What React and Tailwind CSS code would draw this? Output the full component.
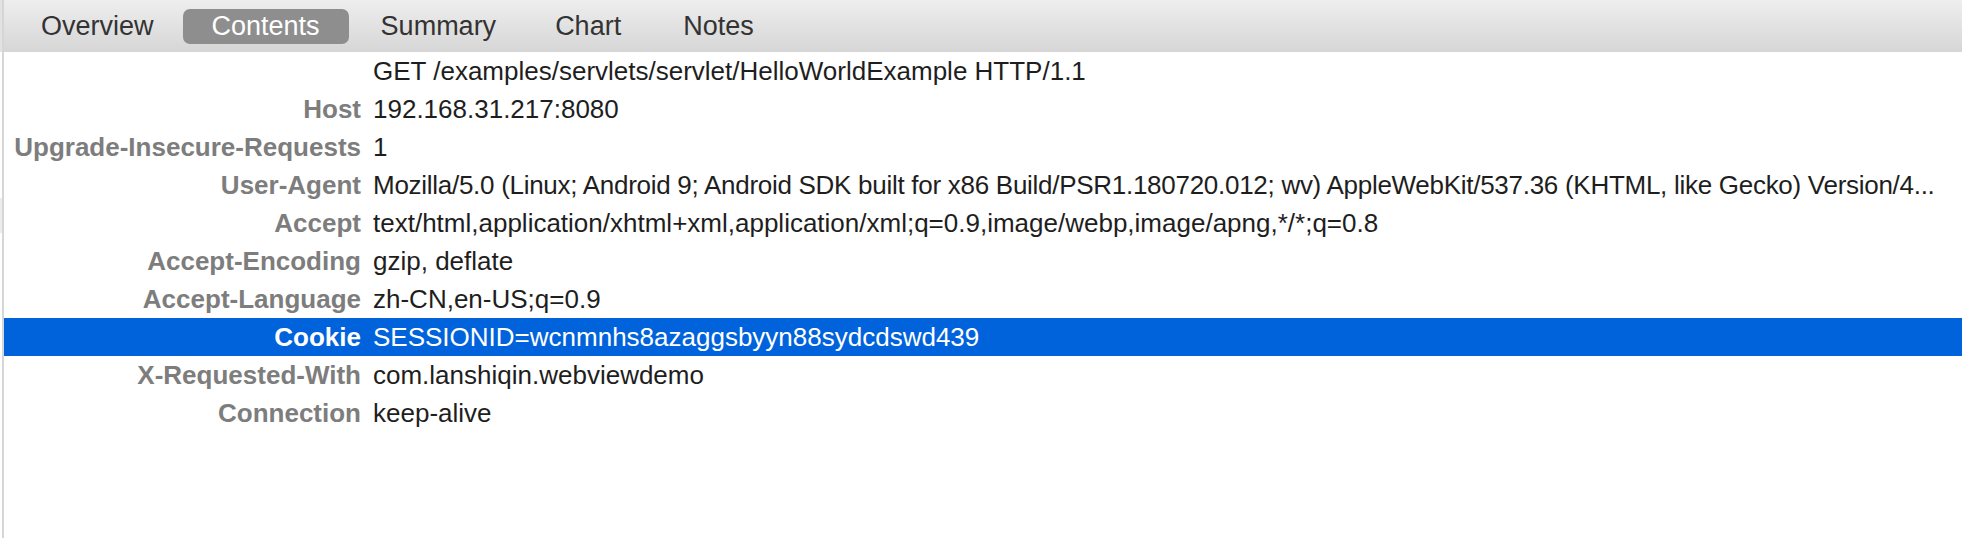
import React from 'react';

const tabs = [
  { name: 'Overview', cls: '' },
  { name: 'Contents', cls: '', active: true },
  { name: 'Summary', cls: 'ml-[3px]' },
  { name: 'Chart', cls: 'ml-[1px]' },
  { name: 'Notes', cls: 'ml-[4px]' },
];

// the long user agent is shown cut, as the inspector does it
const headers = [
  ['', 'GET /examples/servlets/servlet/HelloWorldExample HTTP/1.1'],
  ['Host', '192.168.31.217:8080'],
  ['Upgrade-Insecure-Requests', '1'],
  ['User-Agent', 'Mozilla/5.0 (Linux; Android 9; Android SDK built for x86 Build/PSR1.180720.012; wv) AppleWebKit/537.36 (KHTML, like Gecko) Version/4...', 'tracking-[-0.28px]'],
  ['Accept', 'text/html,application/xhtml+xml,application/xml;q=0.9,image/webp,image/apng,*/*;q=0.8'],
  ['Accept-Encoding', 'gzip, deflate'],
  ['Accept-Language', 'zh-CN,en-US;q=0.9'],
  ['Cookie', 'SESSIONID=wcnmnhs8azaggsbyyn88sydcdswd439'],
  ['X-Requested-With', 'com.lanshiqin.webviewdemo'],
  ['Connection', 'keep-alive'],
];

function Tab({ name, active, cls }) {
  return (
    <div
      className={`h-[35px] px-[29px] flex items-center rounded-[7px] text-[27px] leading-[35px] ${cls} ${
        active ? 'bg-[#8e8e8e] text-white' : 'text-[#333333]'
      }`}
    >
      {name}
    </div>
  );
}

export default function App() {
  const selected = 7;
  return (
    <div className="w-[1962px] h-[538px] bg-white flex font-['Liberation_Sans',Arial,sans-serif] overflow-hidden">
      {/* left edge */}
      <div className="w-[2px] flex flex-col">
        <div className="h-[52px] bg-[#e2e2e2]" />
        <div className="h-[146px]" />
        <div className="h-[35px] bg-[#ececec]" />
      </div>
      <div className="flex-1 flex flex-col border-l-2 border-[#d6d6d6] min-w-0">
        {/* tab bar */}
        <div className="h-[52px] shrink-0 bg-gradient-to-b from-[#eeeeee] to-[#d6d6d6] flex items-center pl-[8px]">
          {tabs.map((t) => (
            <Tab key={t.name} {...t} />
          ))}
        </div>

        {/* header table */}
        <div className="flex flex-col">
          {headers.map(([k, v, extra], i) => {
            const on = i === selected;
            return (
              <div
                key={i}
                className={`h-[38px] flex items-center text-[26px] leading-[32px] ${on ? 'bg-[#0163dc]' : ''}`}
              >
                <div
                  className={`w-[362px] shrink-0 pr-[5px] text-right font-bold ${
                    on ? 'text-white' : 'text-[#7d7d7d]'
                  }`}
                >
                  {k}
                </div>
                <div
                  className={`flex-1 min-w-0 pl-[7px] whitespace-nowrap ${extra || ''} ${
                    on ? 'text-white' : 'text-[#1e1e1e]'
                  }`}
                >
                  {v}
                </div>
              </div>
            );
          })}
        </div>
      </div>
    </div>
  );
}
